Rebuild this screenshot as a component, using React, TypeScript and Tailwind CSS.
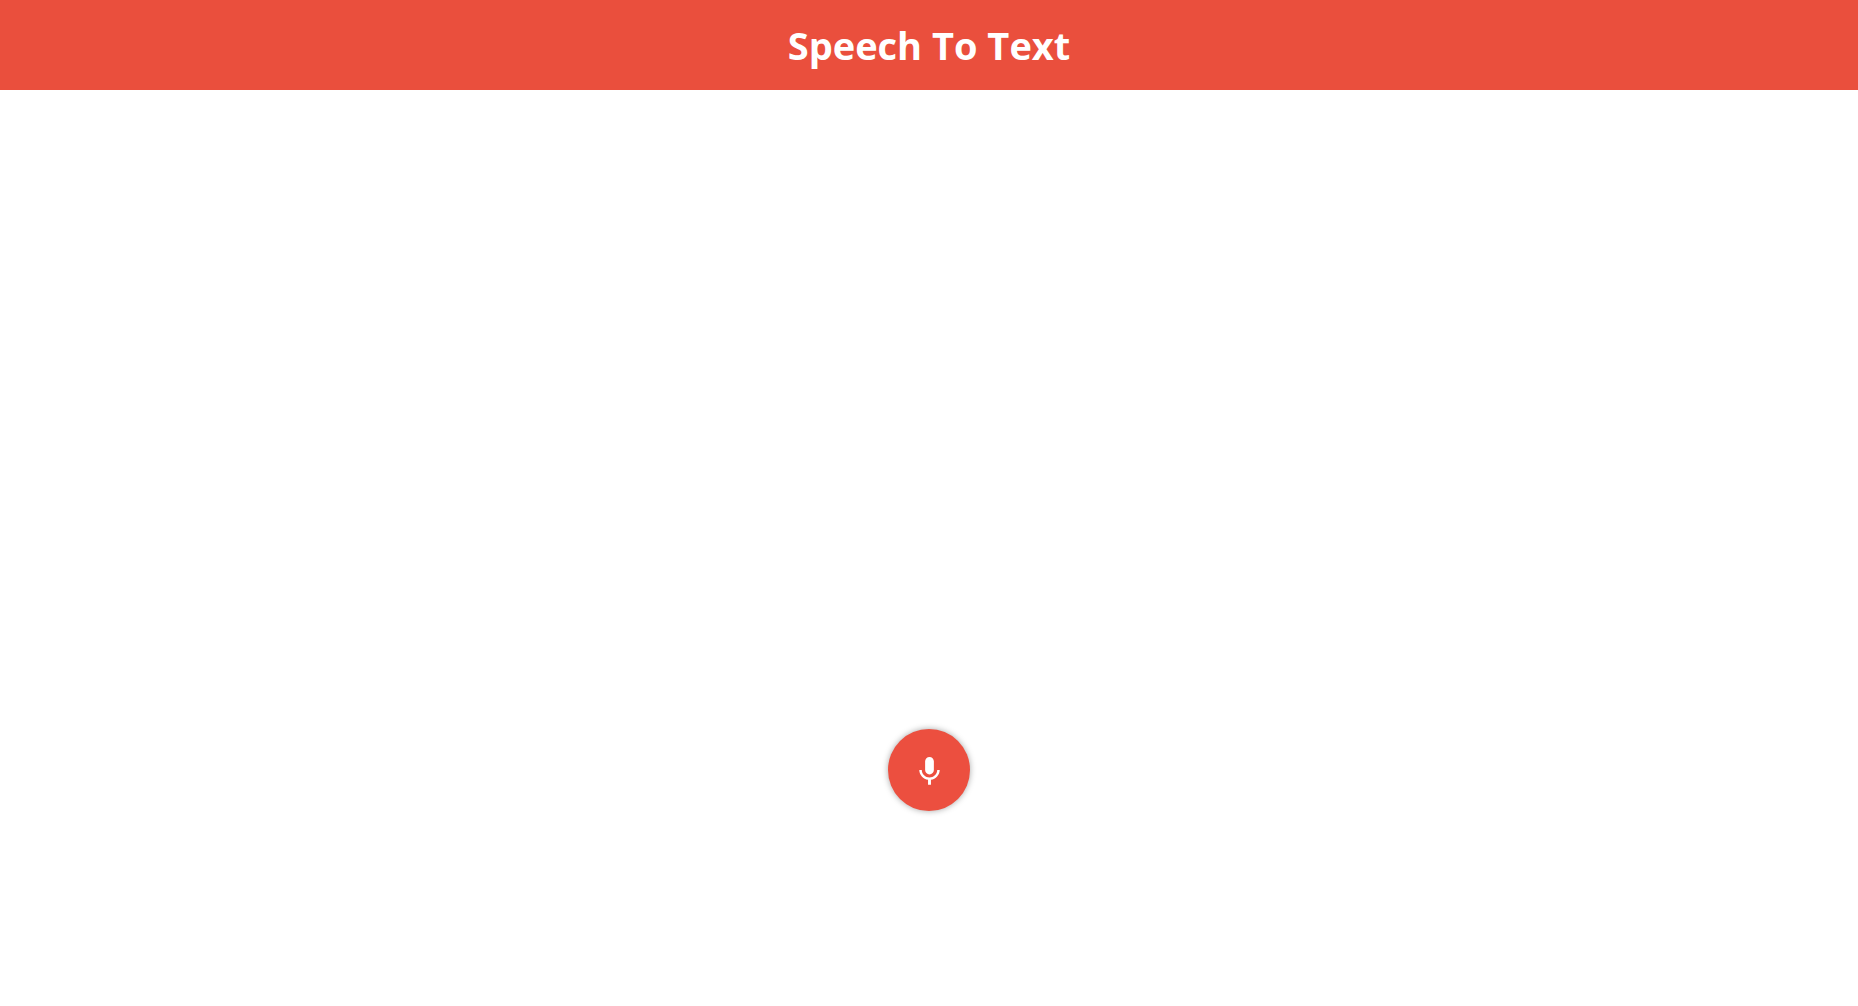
export default function App() {
  return (
    <div className="flex min-h-screen flex-col bg-white">
      <header className="flex h-[90px] items-center justify-center bg-[#ea4f3d]">
        <h1 className="pt-[1px] font-['Comic_Sans_MS','Open_Sans',sans-serif] text-[38px] font-bold text-white">
          Speech To Text
        </h1>
      </header>
      <main className="flex flex-1 flex-col items-center justify-end pb-[195px]">
        <button className="flex h-[82px] w-[82px] items-center justify-center rounded-full bg-[#ec4f3f] pt-[2px] shadow-[0_0_6px_rgba(0,0,0,0.35)]">
          <svg viewBox="0 0 24 24" className="h-[35px] w-[35px] fill-white">
            <path d="M12 14c1.66 0 2.99-1.34 2.99-3L15 5c0-1.66-1.34-3-3-3S9 3.34 9 5v6c0 1.66 1.34 3 3 3zm5.3-3c0 3-2.54 5.1-5.3 5.1S6.7 14 6.7 11H5c0 3.41 2.72 6.23 6 6.72V21h2v-3.28c3.28-.48 6-3.3 6-6.72h-1.7z" />
          </svg>
        </button>
      </main>
    </div>
  )
}
